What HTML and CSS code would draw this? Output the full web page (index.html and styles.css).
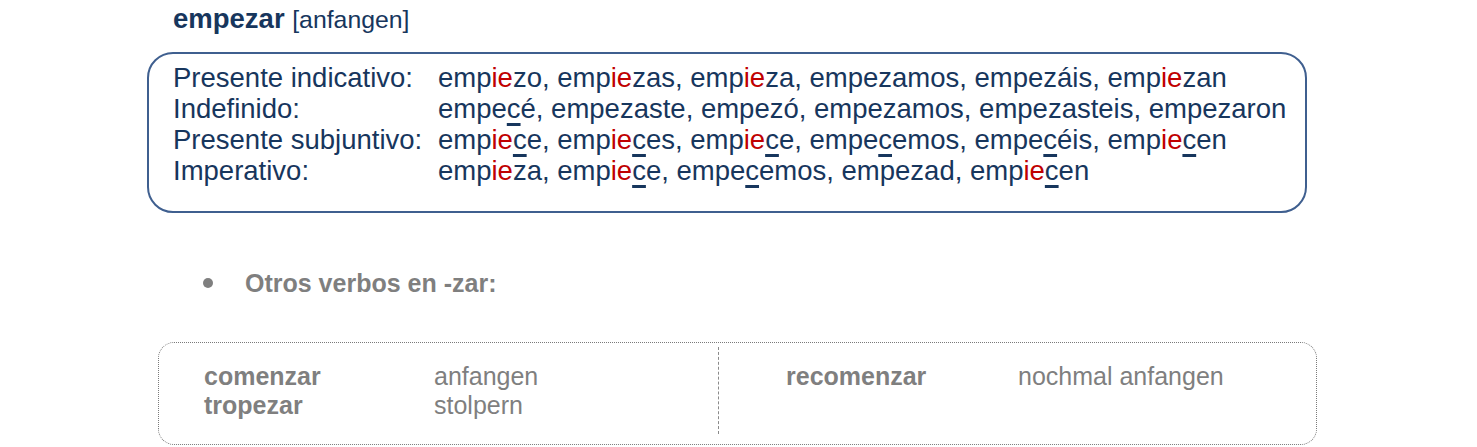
FILE: index.html
```html
<!DOCTYPE html>
<html lang="es">
<head>
<meta charset="utf-8">
<title>empezar</title>
<link rel="stylesheet" href="styles.css">
</head>
<body>
<div class="page">
  <h1 class="title"><span class="verb">empezar</span> <span class="gloss">[anfangen]</span></h1>

  <div class="conj-box">
    <div class="tense">Presente indicativo:</div>
    <div class="forms">emp<span class="red">ie</span>zo, emp<span class="red">ie</span>zas, emp<span class="red">ie</span>za, empezamos, empezáis, emp<span class="red">ie</span>zan</div>
    <div class="tense">Indefinido:</div>
    <div class="forms">empe<span class="ul">c</span>é, empezaste, empezó, empezamos, empezasteis, empezaron</div>
    <div class="tense">Presente subjuntivo:</div>
    <div class="forms">emp<span class="red">ie</span><span class="ul">c</span>e, emp<span class="red">ie</span><span class="ul">c</span>es, emp<span class="red">ie</span><span class="ul">c</span>e, empe<span class="ul">c</span>emos, empe<span class="ul">c</span>éis, emp<span class="red">ie</span><span class="ul">c</span>en</div>
    <div class="tense">Imperativo:</div>
    <div class="forms">emp<span class="red">ie</span>za, emp<span class="red">ie</span><span class="ul">c</span>e, empe<span class="ul">c</span>emos, empezad, emp<span class="red">ie</span><span class="ul">c</span>en</div>
  </div>

  <ul class="bullets">
    <li>Otros verbos en -zar:</li>
  </ul>

  <div class="others">
    <div class="col col-left">
      <span class="term">comenzar</span><span class="trans">anfangen</span>
      <span class="term">tropezar</span><span class="trans">stolpern</span>
    </div>
    <div class="col col-right">
      <span class="term">recomenzar</span><span class="trans">nochmal anfangen</span>
    </div>
  </div>
</div>
</body>
</html>
```

FILE: styles.css
```css
html, body {
  margin: 0;
  padding: 0;
  background: #ffffff;
}

.page {
  font-family: "Liberation Sans", Arial, sans-serif;
  color: #17365d;
  width: 1477px;
  height: 447px;
  overflow: hidden;
}

.title {
  margin: 3px 0 0 173px;
  font-size: 27.5px;
  line-height: 32px;
  font-weight: normal;
}

.title .verb {
  font-weight: bold;
}

.title .gloss {
  font-size: 24.8px;
}

.conj-box {
  margin: 16px 0 0 147px;
  width: 1160px;
  height: 161px;
  box-sizing: border-box;
  border: 2px solid #3f5f8f;
  border-radius: 26px;
  padding: 8px 0 0 24px;
  display: grid;
  grid-template-columns: 265px 1fr;
  align-content: start;
  font-size: 27.5px;
  line-height: 31px;
}

.forms {
  white-space: nowrap;
}

.red {
  color: #c00000;
}

.ul {
  text-decoration: underline;
  text-decoration-color: #17365d;
  text-decoration-thickness: 3px;
  text-underline-offset: 5px;
}

.bullets {
  list-style: none;
  margin: 55px 0 0 0;
  padding: 0 0 0 245px;
  color: #7f7f7f;
  font-size: 25px;
  font-weight: bold;
  line-height: 30px;
}

.bullets li {
  position: relative;
}

.bullets li::before {
  content: "";
  position: absolute;
  left: -42px;
  top: 10px;
  width: 10px;
  height: 10px;
  border-radius: 50%;
  background: #7f7f7f;
}

.others {
  margin: 44px 0 0 158px;
  width: 1159px;
  height: 103px;
  box-sizing: border-box;
  border: 1px dotted #7a7a7a;
  border-radius: 16px;
  display: grid;
  grid-template-columns: 559px 1fr;
  color: #7f7f7f;
  font-size: 25px;
  line-height: 28.5px;
}

.col {
  display: grid;
  align-content: start;
}

.col-left {
  grid-template-columns: 230px 1fr;
  padding: 19px 0 0 45px;
}

.col-right {
  grid-template-columns: 232px 1fr;
  padding: 15px 0 0 67px;
  border-left: 1px dashed #8a8a8a;
  margin: 4px 0 10px 0;
}

.term {
  font-weight: bold;
}
```
